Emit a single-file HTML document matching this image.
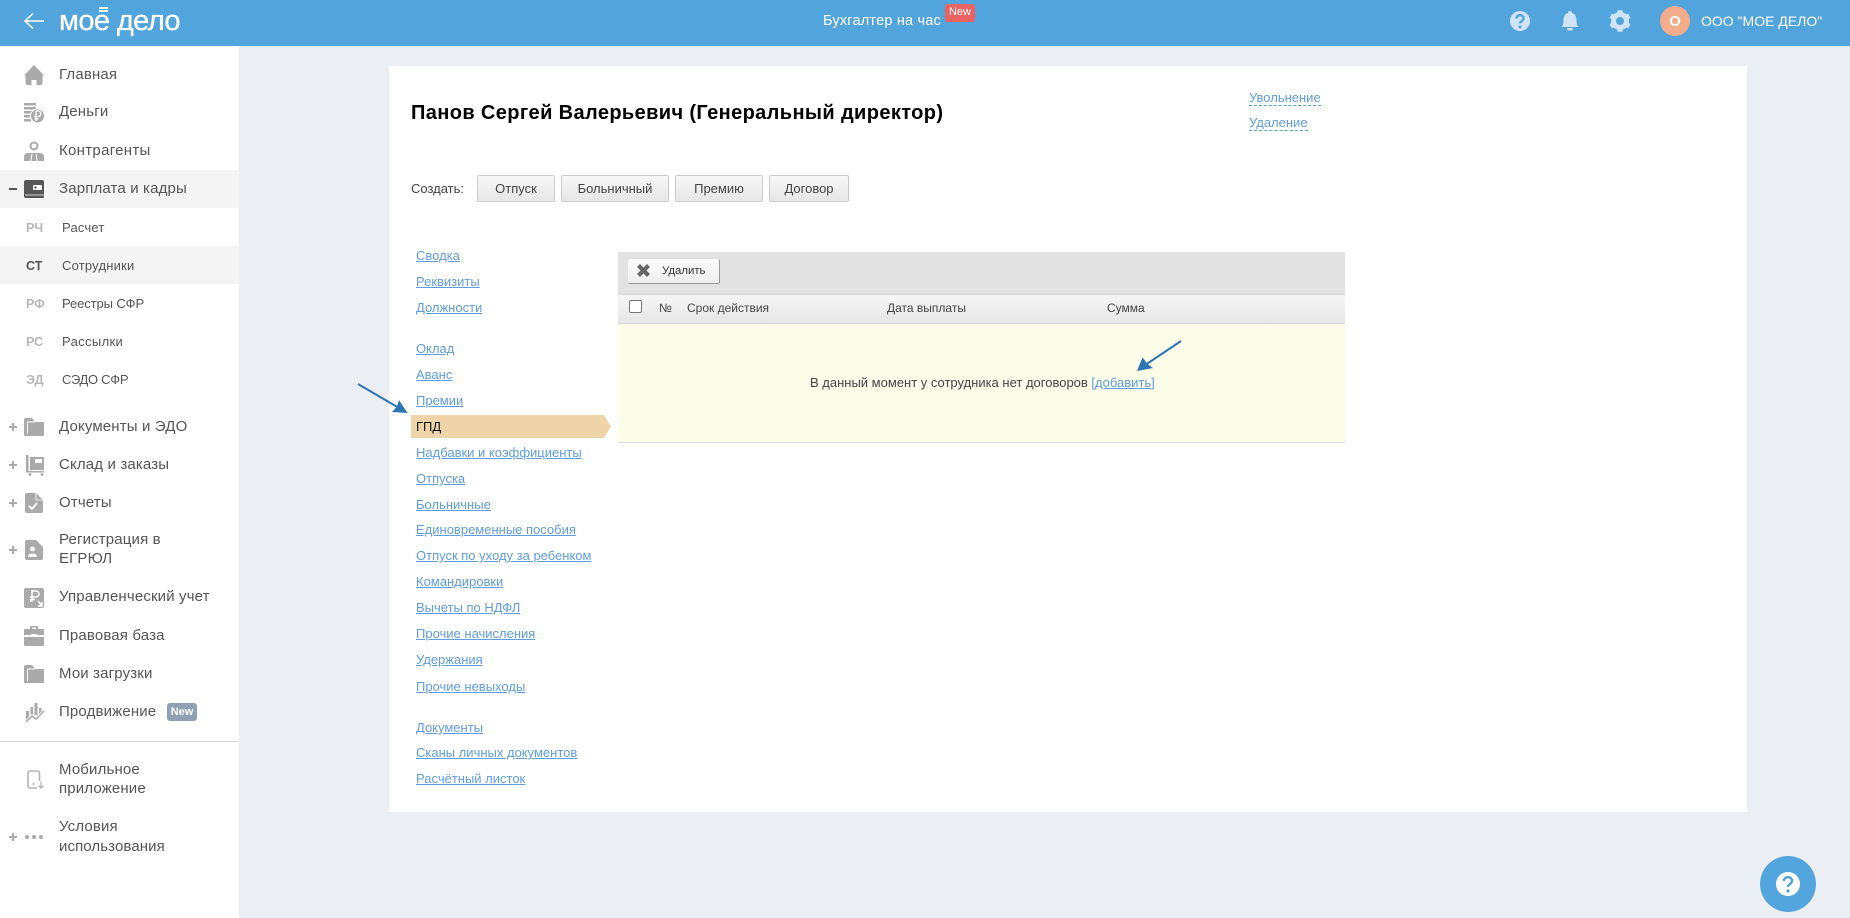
<!DOCTYPE html>
<html lang="ru"><head><meta charset="utf-8"><title>Мое дело</title>
<style>
html,body{margin:0;padding:0;width:1850px;height:918px;overflow:hidden;background:#ebeef2;font-family:"Liberation Sans",sans-serif}
div,a,span{position:absolute;white-space:nowrap;display:block}
.hdr{left:0;top:0;width:1850px;height:46px;background:#52a5dc}
.side{left:0;top:46px;width:239px;height:872px;background:#fff}
.hl{left:0;width:239px;height:38px;background:#f4f4f4}
.m{left:59px;font-size:15px;line-height:20px;color:#555;letter-spacing:.15px}
.c{left:26px;font-size:12.5px;font-weight:bold;line-height:16px;color:#b7b7b7}
.l{left:62px;font-size:13px;line-height:16px;color:#555;letter-spacing:.1px}
.card{left:389px;top:66px;width:1358px;height:746px;background:#fff}
.n{left:416px;font-size:13px;line-height:16px;color:#5f9ddc;text-decoration:underline}
.b{top:175px;height:25px;border:1px solid #ccc;border-radius:2px;background:linear-gradient(#f8f8f8,#e6e6e6);font-size:13px;line-height:25px;text-align:center;color:#444;box-sizing:content-box}
.th{top:300px;font-size:12px;line-height:16px;color:#444}
</style></head><body>
<div class="hdr"></div>
<div style="left:59px;top:1px;font-size:29px;line-height:40px;color:#fff;letter-spacing:-.6px;-webkit-text-stroke:.3px #fff">мое дело</div>
<div style="left:823px;top:12px;font-size:14.5px;line-height:18px;color:#fff;letter-spacing:.2px">Бухгалтер на час</div>
<div style="left:945px;top:4px;width:30px;height:18px;border-radius:3px;background:#eb6464;color:#fff;font-size:11px;line-height:17px;text-align:center">New</div>
<div style="left:1660px;top:6px;width:30px;height:30px;border-radius:50%;background:#f4ad8b;color:#fff;font-size:15px;font-weight:bold;line-height:31px;text-align:center">О</div>
<div style="left:1701px;top:12px;font-size:14px;line-height:18px;color:#fff">ООО "МОЕ ДЕЛО"</div>

<div class="side"></div>
<div class="hl" style="top:170px"></div>
<div class="hl" style="top:246px"></div>
<div style="left:0;top:741px;width:239px;height:1px;background:#d8d8d8"></div>

<div class="m" style="top:65px">Главная</div>
<div class="m" style="top:102px">Деньги</div>
<div class="m" style="top:141px;letter-spacing:.3px">Контрагенты</div>
<div class="m" style="top:179px">Зарплата и кадры</div>
<div class="c" style="top:220px">РЧ</div><div class="l" style="top:220px;letter-spacing:.2px">Расчет</div>
<div class="c" style="top:258px;color:#555">СТ</div><div class="l" style="top:258px;letter-spacing:.2px">Сотрудники</div>
<div class="c" style="top:296px">РФ</div><div class="l" style="top:296px;letter-spacing:-.1px">Реестры СФР</div>
<div class="c" style="top:334px">РС</div><div class="l" style="top:334px;letter-spacing:.35px">Рассылки</div>
<div class="c" style="top:372px">ЭД</div><div class="l" style="top:372px;letter-spacing:-.3px">СЭДО СФР</div>
<div class="m" style="top:417px">Документы и ЭДО</div>
<div class="m" style="top:455px">Склад и заказы</div>
<div class="m" style="top:493px">Отчеты</div>
<div class="m" style="top:530px">Регистрация в</div>
<div class="m" style="top:549px">ЕГРЮЛ</div>
<div class="m" style="top:587px">Управленческий учет</div>
<div class="m" style="top:626px">Правовая база</div>
<div class="m" style="top:664px">Мои загрузки</div>
<div class="m" style="top:702px">Продвижение</div>
<div style="left:167px;top:703px;width:30px;height:18px;border-radius:3px;background:#8fa1b5;color:#fff;font-size:11px;font-weight:bold;line-height:18px;text-align:center">New</div>
<div class="m" style="top:760px">Мобильное</div>
<div class="m" style="top:779px">приложение</div>
<div class="m" style="top:817px">Условия</div>
<div class="m" style="top:837px;letter-spacing:.1px">использования</div>

<div class="card"></div>
<div style="left:411px;top:100px;font-size:20px;font-weight:bold;line-height:26px;color:#000;letter-spacing:.38px">Панов Сергей Валерьевич (Генеральный директор)</div>
<div style="left:1249px;top:90px;font-size:13px;line-height:15px;color:#5f9ddc;border-bottom:1px dashed #5f9ddc">Увольнение</div>
<div style="left:1249px;top:115px;font-size:13px;line-height:15px;color:#5f9ddc;border-bottom:1px dashed #5f9ddc">Удаление</div>
<div style="left:411px;top:181px;font-size:13px;line-height:16px;color:#444">Создать:</div>
<div class="b" style="left:477px;width:76px">Отпуск</div>
<div class="b" style="left:561px;width:106px">Больничный</div>
<div class="b" style="left:675px;width:86px">Премию</div>
<div class="b" style="left:769px;width:78px">Договор</div>

<div class="n" style="top:248px">Сводка</div>
<div class="n" style="top:274px">Реквизиты</div>
<div class="n" style="top:300px">Должности</div>
<div class="n" style="top:341px">Оклад</div>
<div class="n" style="top:367px">Аванс</div>
<div class="n" style="top:393px">Премии</div>
<div style="left:411px;top:415px;width:200px;height:23px;background:#efd4aa;clip-path:polygon(0 0,193px 0,200px 50%,193px 100%,0 100%)"></div>
<div style="left:416px;top:419px;font-size:13px;line-height:16px;color:#111">ГПД</div>
<div class="n" style="top:445px">Надбавки и коэффициенты</div>
<div class="n" style="top:471px">Отпуска</div>
<div class="n" style="top:497px">Больничные</div>
<div class="n" style="top:522px">Единовременные пособия</div>
<div class="n" style="top:548px">Отпуск по уходу за ребенком</div>
<div class="n" style="top:574px">Командировки</div>
<div class="n" style="top:600px">Вычеты по НДФЛ</div>
<div class="n" style="top:626px">Прочие начисления</div>
<div class="n" style="top:652px">Удержания</div>
<div class="n" style="top:679px">Прочие невыходы</div>
<div class="n" style="top:720px">Документы</div>
<div class="n" style="top:745px">Сканы личных документов</div>
<div class="n" style="top:771px">Расчётный листок</div>

<div style="left:618px;top:252px;width:727px;height:42px;background:#e2e2e2"></div>
<div style="left:628px;top:259px;width:91px;height:24px;background:linear-gradient(#fbfbfb,#eeeeee);border-right:1px solid #999;border-bottom:1px solid #999;border-radius:2px"></div>
<div style="left:662px;top:263px;font-size:11.4px;line-height:16px;color:#333">Удалить</div>
<div style="left:618px;top:294px;width:727px;height:30px;background:linear-gradient(#f6f6f6,#e6e6e6);border-top:1px solid #d6d6d6;border-bottom:1px solid #d6d6d6;box-sizing:border-box"></div>
<div style="left:629px;top:300px;width:11px;height:11px;background:#fff;border:1px solid #777;border-radius:2px"></div>
<div class="th" style="left:659px;top:300px">№</div>
<div class="th" style="left:687px;top:300px">Срок действия</div>
<div class="th" style="left:887px;top:300px">Дата выплаты</div>
<div class="th" style="left:1107px;top:300px">Сумма</div>
<div style="left:618px;top:324px;width:727px;height:119px;background:#fbfde9;border-bottom:1px solid #e0e0e0;box-sizing:border-box"></div>
<div style="left:810px;top:375px;font-size:13px;line-height:16px;color:#444">В данный момент у сотрудника нет договоров <span style="position:static;display:inline;color:#5f9ddc">[<u>добавить</u>]</span></div>

<div style="left:1760px;top:856px;width:56px;height:56px;border-radius:50%;background:#52a5dc"></div>

<svg width="1850" height="918" viewBox="0 0 1850 918" style="position:absolute;left:0;top:0">
<!-- header -->
<path d="M44 21H25M33 13.500l-8 7.500 8 7.500" fill="none" stroke="#fff" stroke-width="1.500"/>
<path d="M99 8h9M99 11h9" stroke="#fff" stroke-width="1.700"/>
<g fill="#cfe5f6">
<circle cx="1520" cy="21" r="10"/>
<path d="M1570 11a2 2 0 0 1 2 2c3.500 1 4.500 4 4.500 7.500 0 3 .5 5 2 6.500h-17c1.500-1.500 2-3.500 2-6.500 0-3.500 1-6.500 4.500-7.500a2 2 0 0 1 2-2z"/>
<rect x="1567" y="28" width="6" height="2.500" rx="1.200"/>
</g>
<g transform="translate(1620 21)">
<circle r="6.500" fill="none" stroke="#cfe5f6" stroke-width="5"/>
<g fill="#cfe5f6">
<rect x="-2.500" y="-10.700" width="5" height="4"/>
<rect x="-2.500" y="-10.700" width="5" height="4" transform="rotate(60)"/>
<rect x="-2.500" y="-10.700" width="5" height="4" transform="rotate(120)"/>
<rect x="-2.500" y="-10.700" width="5" height="4" transform="rotate(180)"/>
<rect x="-2.500" y="-10.700" width="5" height="4" transform="rotate(240)"/>
<rect x="-2.500" y="-10.700" width="5" height="4" transform="rotate(300)"/>
</g>
</g>
<path d="M1516.500 18.500c0-4.500 7-4.500 7 0 0 2.500-3.500 2.500-3.500 5" fill="none" stroke="#52a5dc" stroke-width="2.400"/>
<circle cx="1520" cy="27" r="1.500" fill="#52a5dc"/>
<!-- side icons -->
<g fill="#aaa">
<path d="M34 65L44 75.500H42.500V83Q42.500 85 40.500 85H36.500V80H31.500V85H27.500Q25.500 85 25.500 83V75.500H24Z"/>
<path d="M24 103h12v2.500H24zM24 107h12v2.500H24zM24 111h10v2.500H24zM24 115h7v2.500H24zM24 119h7v2.500H24z"/>
<path fill-rule="evenodd" d="M34 141.500a4.500 4.500 0 1 1 0 9 4.500 4.500 0 0 1 0-9zm0 2a2.500 2.500 0 1 0 0 5 2.500 2.500 0 0 0 0-5z"/>
<path d="M24 161v-4q0-4 4-4h12q4 0 4 4v4z"/>
<path d="M9 426h8v2H9zM12 423h2v8h-2zM9 464h8v2H9zM12 461h2v8h-2zM9 502h8v2H9zM12 499h2v8h-2zM9 549h8v2H9zM12 546h2v8h-2zM9 836h8v2H9zM12 833h2v8h-2z"/>
<path d="M24 420q0-2 2-2h6l3 4h8q1 0 1 1v12q0 1-1 1H25q-1 0-1-1z"/>
<path d="M26 455h2.500v16H44v1.500H26zM30 457h14v13H30z"/>
<circle cx="30" cy="474.500" r="1.400"/><circle cx="42" cy="474.500" r="1.400"/>
<path d="M27 493h9l7 7v11q0 2-2 2H27q-2 0-2-2v-16q0-2 2-2z"/>
<path d="M27 540h9l7 7v11q0 2-2 2H27q-2 0-2-2v-16q0-2 2-2z"/>
<rect x="24" y="588" width="20" height="20" rx="2"/>
<path d="M30 627q0-1 1-1h6q1 0 1 1v2h5q1 0 1 1v5H24v-5q0-1 1-1h5zm2 .500v1.500h4v-1.500zM24 637h20v8q0 1-1 1H25q-1 0-1-1z"/>
<path d="M24 667q0-2 2-2h6l3 4h8q1 0 1 1v12q0 1-1 1H25q-1 0-1-1z"/>
<path d="M26 711h3v9h-3zM30.500 707h2.700v11h-2.700zM34.500 703h3v12h-3zM39 708h2.500v6H39z"/>
<circle cx="27" cy="837" r="2"/><circle cx="34" cy="837" r="2"/><circle cx="41" cy="837" r="2"/>
</g>
<circle cx="37.500" cy="116" r="7" fill="#aaa" stroke="#fff" stroke-width="1"/>
<path d="M32 154l-1.200 7M36 154l1.200 7" stroke="#fff" stroke-width="1" fill="none"/>
<path d="M26 722l6-6 4 3 8-8" fill="none" stroke="#fff" stroke-width="3"/>
<path d="M26 722l6-6 4 3 8-8" fill="none" stroke="#aaa" stroke-width="1.500"/>
<path d="M27.500 422v12M27.500 422H35M27.500 669v12M27.500 669H35" stroke="#fff" stroke-width=".9" fill="none"/>
<rect x="35" y="459" width="7" height="4" fill="#fff"/>
<path d="M36 493v7h7" stroke="#fff" stroke-width=".8" fill="none"/>
<path d="M29 506l3 3 5-6" fill="none" stroke="#fff" stroke-width="1.800"/>
<circle cx="32.500" cy="549" r="2.400" fill="#fff"/>
<path d="M28 557q0-3.500 4.500-3.500t4.500 3.500z" fill="#fff"/>
<path d="M36 111v10M34 116.500h4.500a2.800 2.800 0 0 0 0-5.500H36M34.500 118.800h4" fill="none" stroke="#fff" stroke-width="1.300"/>
<path d="M32 590v11h-2M32 591h4a3 3 0 0 1 0 6h-6M30 599.500h5M38 601l4 5M42 602v4h-4" fill="none" stroke="#fff" stroke-width="1.500"/>
<path d="M24 636h20" stroke="#fff" stroke-width="1.200"/>
<rect x="31" y="634" width="6" height="3" fill="#fff"/>
<rect x="28" y="771" width="11.500" height="17" rx="2" fill="none" stroke="#b4b4b4" stroke-width="1.600"/>
<path d="M37 781h8v9h-8z" fill="#fff"/>
<path d="M41 781.500v6.500M38.500 785.500l2.500 2.500 2.500-2.500" fill="none" stroke="#b4b4b4" stroke-width="1.300"/>
<circle cx="33.500" cy="784" r="1" fill="#b4b4b4"/>
<!-- wallet -->
<path d="M9 189h8" stroke="#555" stroke-width="2"/>
<path d="M26 180h16q2 0 2 2v15q0 1-1 1H26q-2 0-2-2v-14q0-2 2-2z" fill="#565656"/>
<path d="M25 195h19" stroke="#fff" stroke-width=".7"/>
<rect x="33" y="185" width="9" height="5" rx="1" fill="#fff"/>
<circle cx="35.500" cy="187.500" r="1.200" fill="#565656"/>
<!-- delete x -->
<path d="M638.500 265.500l10 10M648.500 265.500l-10 10" stroke="#666" stroke-width="4.200"/>
<!-- arrows -->
<path d="M358 384L399 408" stroke="#2f74b5" stroke-width="2" fill="none"/>
<path d="M407.500 413L392 412L397 406.500L399 400z" fill="#2f74b5"/>
<path d="M1181 341L1146 364.500" stroke="#2f74b5" stroke-width="2" fill="none"/>
<path d="M1137 371L1142.500 357.500L1147.500 364L1153 368z" fill="#2f74b5"/>
<!-- fab -->
<circle cx="1788" cy="884" r="12" fill="#fff"/>
<path d="M1784 881c0-5 8-5 8 0 0 3-4 3-4 6" fill="none" stroke="#52a5dc" stroke-width="2.400"/>
<circle cx="1788" cy="891" r="1.600" fill="#52a5dc"/>
</svg>
</body></html>
